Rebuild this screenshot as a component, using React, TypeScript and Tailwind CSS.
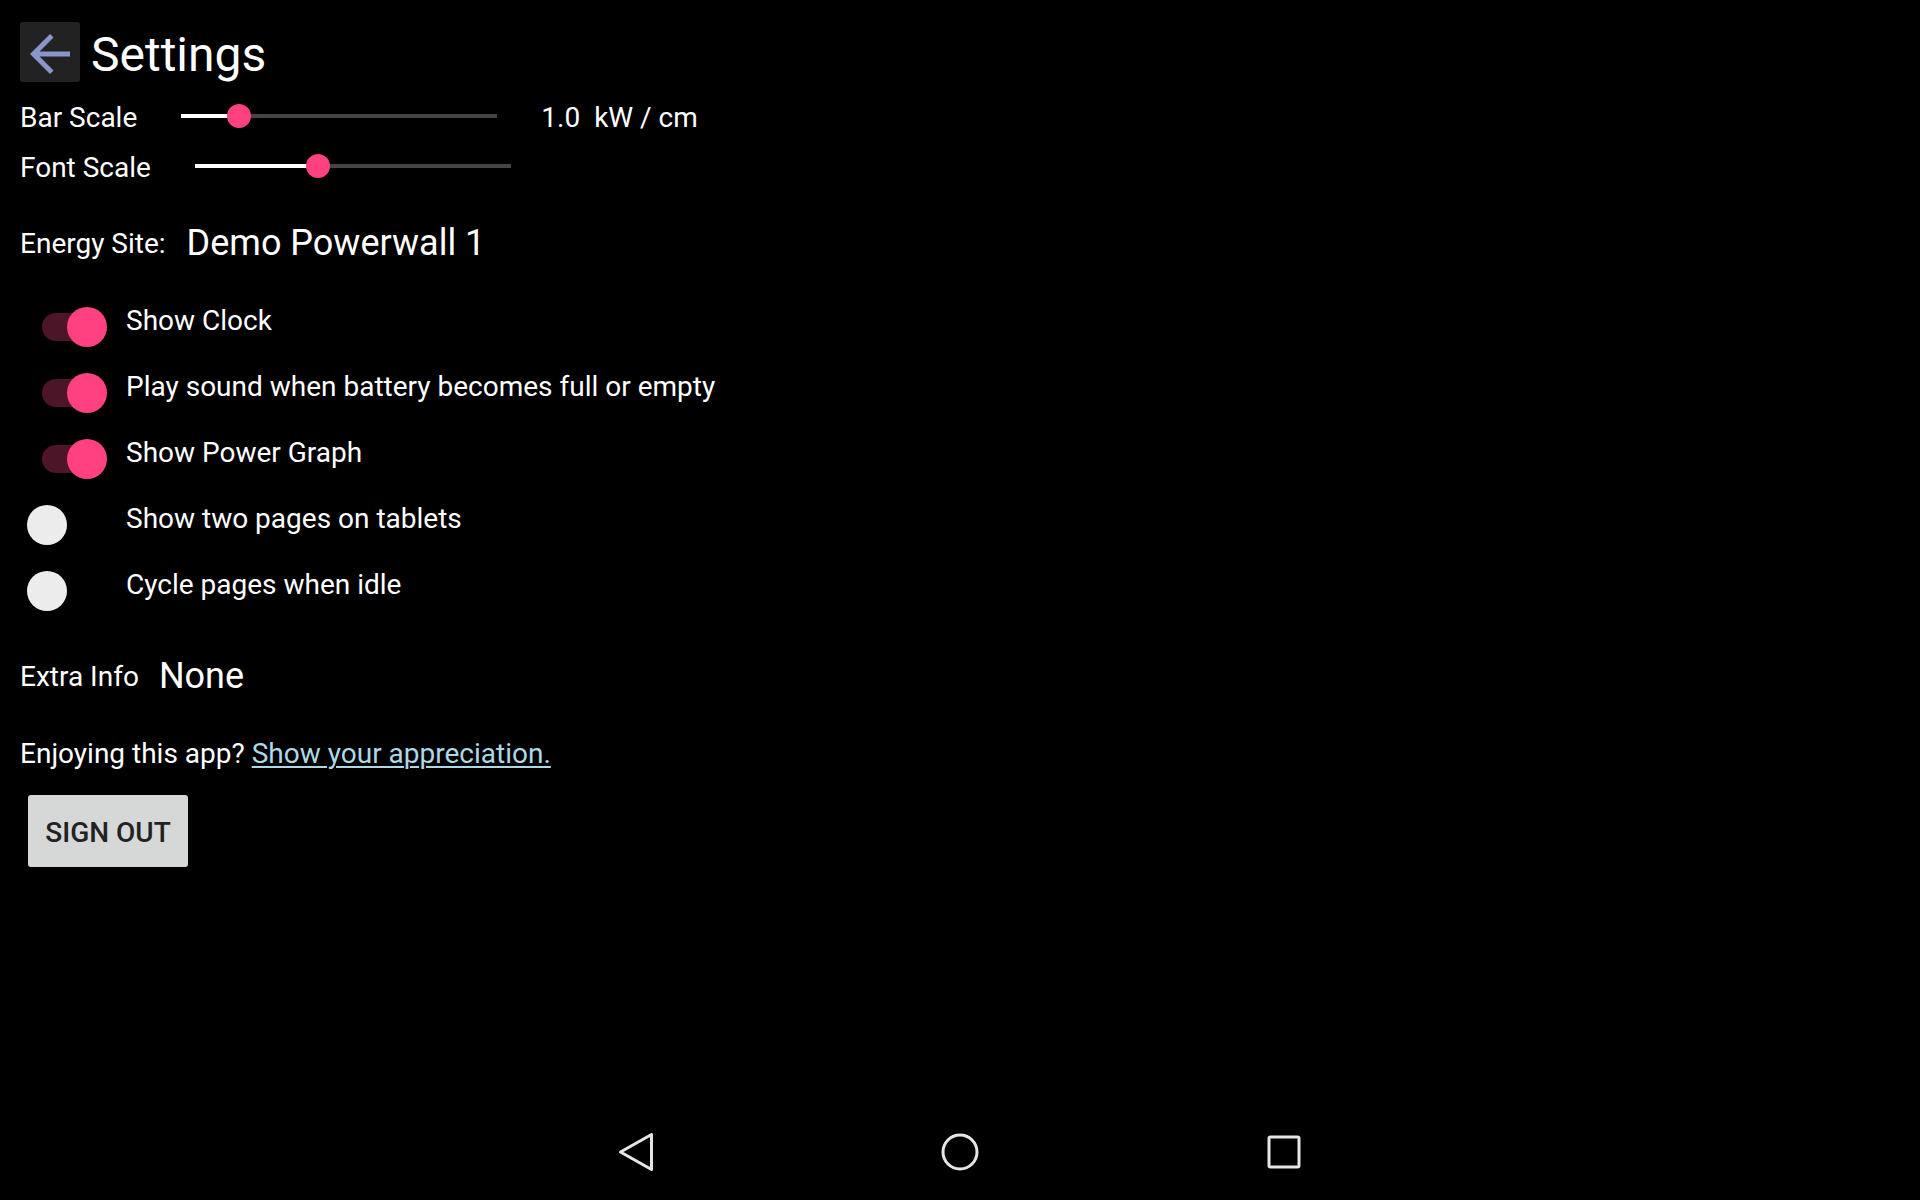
import { useState } from 'react';

type SliderProps = {
  width: number;
  value: number; // px from track start to thumb centre
};

const Slider = ({ width, value }: SliderProps) => {
  return (
    <div className="relative h-[24px] flex items-center" style={{ width }}>
      <div className="flex w-full h-[4px]">
        <div className="h-full bg-white" style={{ width: value }} />
        <div className="h-full flex-1 bg-[#444444]" />
      </div>
      <div
        className="absolute top-0 w-[24px] h-[24px] rounded-full bg-[#ff4081]"
        style={{ left: value - 12 }}
      />
    </div>
  );
};

const Toggle = ({ on }: { on: boolean }) => (
  <div className="relative w-[80px] h-[40px] shrink-0">
    {on && <div className="absolute left-[15px] top-[6px] w-[50px] h-[28px] rounded-full bg-[#4d1628]" />}
    <div
      className={`absolute top-0 w-[40px] h-[40px] rounded-full ${
        on ? 'left-[40px] bg-[#ff4081]' : 'left-0 bg-[#ececec]'
      }`}
    />
  </div>
);

const options = [
  { label: 'Show Clock', on: true },
  { label: 'Play sound when battery becomes full or empty', on: true },
  { label: 'Show Power Graph', on: true },
  { label: 'Show two pages on tablets', on: false },
  { label: 'Cycle pages when idle', on: false },
];

export default function App() {
  const [toggles] = useState(options);

  return (
    <div className="w-[1920px] h-[1200px] bg-black text-white font-['Roboto',sans-serif] flex flex-col overflow-hidden">
      {/* Header */}
      <div className="mt-[22px] ml-[20px] flex items-start h-[60px]">
        <button className="w-[60px] h-[60px] bg-[#222222] rounded-[3px] flex items-center justify-center">
          <svg width="66" height="66" viewBox="0 0 24 24" className="mt-[3px]">
            <path
              d="M20 11H7.83l5.59-5.59L12 4l-8 8 8 8 1.41-1.41L7.83 13H20v-2z"
              fill="#8a95cc"
            />
          </svg>
        </button>
        <h1 className="ml-[11px] mt-[5px] text-[48px] leading-[56px] font-normal">Settings</h1>
      </div>

      {/* Bar scale */}
      <div className="mt-[9px] pl-[20px] flex items-center h-[50px] text-[28px] leading-[33px]">
        <span className="mt-[2px]">Bar Scale</span>
        <div className="ml-[44px]">
          <Slider width={316} value={58} />
        </div>
        <span className="ml-[44px] mt-[2px]">1.0</span>
        <span className="ml-[14px] mt-[2px]">kW / cm</span>
      </div>

      {/* Font scale */}
      <div className="pl-[20px] flex items-center h-[50px] text-[28px] leading-[33px]">
        <span className="mt-[2px]">Font Scale</span>
        <div className="ml-[44px]">
          <Slider width={316} value={123} />
        </div>
      </div>

      {/* Energy site */}
      <div className="mt-[31px] pl-[20px] flex items-start">
        <span className="mt-[5px] text-[28px] leading-[33px]">Energy Site:</span>
        <span className="ml-[21px] text-[36px] leading-[42px]">Demo Powerwall 1</span>
      </div>

      {/* Toggles */}
      <div className="mt-[30px] flex flex-col">
        {toggles.map((t) => (
          <div key={t.label} className="h-[66px] pl-[27px] flex items-start">
            <div className="mt-[13px]">
              <Toggle on={t.on} />
            </div>
            <span className="ml-[19px] mt-[10px] text-[28px] leading-[33px]">{t.label}</span>
          </div>
        ))}
      </div>

      {/* Extra info */}
      <div className="mt-[31px] pl-[20px] flex items-start">
        <span className="mt-[5px] text-[28px] leading-[33px]">Extra Info</span>
        <span className="ml-[20px] text-[36px] leading-[42px]">None</span>
      </div>

      <p className="mt-[40px] pl-[20px] text-[28px] leading-[33px]">
        Enjoying this app?{' '}
        <a href="#" className="text-[#add8e6] underline underline-offset-[3px] decoration-[2px]">
          Show your appreciation.
        </a>
      </p>

      <div className="mt-[25px] pl-[28px]">
        <button className="w-[160px] h-[72px] bg-[#d6d7d7] rounded-[3px] text-[#222222] text-[28px] font-medium leading-[33px] uppercase pt-[2px]">
          Sign Out
        </button>
      </div>

      <div className="flex-1" />

      {/* Navigation bar */}
      <div className="h-[96px] flex items-center justify-center gap-[204px]">
        <div className="w-[120px] flex justify-center">
          <svg width="40" height="40" viewBox="0 0 40 40">
            <polygon points="4.5,20 35.5,2.5 35.5,37.5" fill="none" stroke="#e6e6e6" strokeWidth="3" strokeLinejoin="round" />
          </svg>
        </div>
        <div className="w-[120px] flex justify-center">
          <svg width="40" height="40" viewBox="0 0 40 40">
            <circle cx="20" cy="20" r="17" fill="none" stroke="#e6e6e6" strokeWidth="3" />
          </svg>
        </div>
        <div className="w-[120px] flex justify-center">
          <svg width="40" height="40" viewBox="0 0 40 40">
            <rect x="5" y="5" width="30" height="30" rx="1.5" fill="none" stroke="#e6e6e6" strokeWidth="3" />
          </svg>
        </div>
      </div>
    </div>
  );
}
